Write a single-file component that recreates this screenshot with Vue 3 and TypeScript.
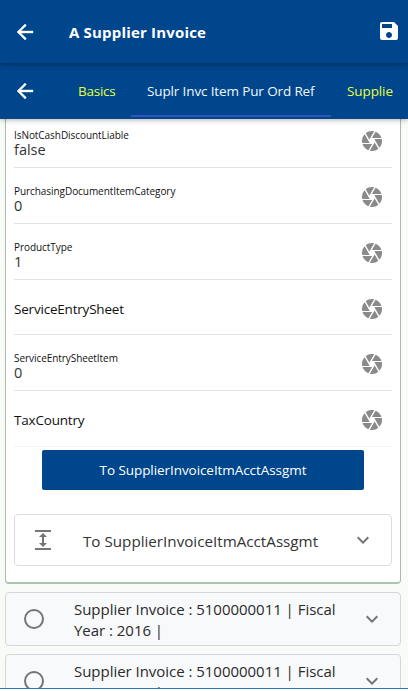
<script setup lang="ts">
interface Field {
  name: string
  value?: string
}

const fields: Field[] = [
  { name: 'IsNotCashDiscountLiable', value: 'false' },
  { name: 'PurchasingDocumentItemCategory', value: '0' },
  { name: 'ProductType', value: '1' },
  { name: 'ServiceEntrySheet' },
  { name: 'ServiceEntrySheetItem', value: '0' },
  { name: 'TaxCountry' },
]
const invoices: string[][] = [
  ['Supplier Invoice : 5100000011 | Fiscal', 'Year : 2016 |'],
  ['Supplier Invoice : 5100000011 | Fiscal', 'Year : 2016 |'],
]
const back = 'M20 11H7.83l5.59-5.59L12 4l-8 8 8 8 1.41-1.41L7.83 13H20v-2z'
const chevron = 'M16.59 8.59L12 13.17 7.41 8.59 6 10l6 6 6-6z'
</script>

<template>
  <div class="screen">
    <header class="bar title-bar">
      <svg class="icon arrow" viewBox="0 0 24 24"><path :d="back" /></svg>
      <h1>A Supplier Invoice</h1>
      <svg class="icon save" viewBox="0 0 24 24">
        <path d="M17 3H5a2 2 0 0 0-2 2v14a2 2 0 0 0 2 2h14c1.1 0 2-.9 2-2V7l-4-4zm-5 16c-1.66 0-3-1.34-3-3s1.34-3 3-3 3 1.34 3 3-1.34 3-3 3zm3-10H5V5h10v4z" />
      </svg>
    </header>
    <nav class="bar tab-bar">
      <svg class="icon arrow" viewBox="0 0 24 24"><path :d="back" /></svg>
      <a class="tab basics">Basics</a>
      <a class="tab active">Suplr Invc Item Pur Ord Ref</a>
      <a class="tab next">Supplie</a>
    </nav>

    <main class="content">
      <section class="detail">
        <div v-for="f in fields" :key="f.name" class="field">
          <div class="text">
            <template v-if="f.value">
              <div class="label">{{ f.name }}</div>
              <div class="value">{{ f.value }}</div>
            </template>
            <div v-else class="placeholder">{{ f.name }}</div>
          </div>
          <svg class="icon" viewBox="0 0 24 24">
            <path d="M9.4 10.5l4.77-8.26C13.47 2.09 12.75 2 12 2c-2.4 0-4.6.85-6.32 2.25l3.66 6.35.06-.1zM21.54 9c-.92-2.92-3.15-5.26-6-6.34L11.88 9h9.66zm.26 1h-7.49l.29.5 4.76 8.25C21 16.97 22 14.61 22 12c0-.69-.07-1.35-.2-2zM8.54 12l-3.9-6.75C3.01 7.03 2 9.39 2 12c0 .69.07 1.35.2 2h7.49l-1.15-2zm-6.08 3c.92 2.92 3.15 5.26 6 6.34L12.12 15H2.46zm11.27 0l-3.9 6.76c.7.15 1.42.24 2.17.24 2.4 0 4.6-.85 6.32-2.25l-3.66-6.35-.93 1.6z" />
          </svg>
        </div>
        <button class="action">To SupplierInvoiceItmAcctAssgmt</button>
        <div class="panel">
          <svg class="icon" viewBox="0 0 24 24">
            <path d="M4 20h16v2H4zM4 2h16v2H4zm9 7h3l-4-4-4 4h3v6H8l4 4 4-4h-3z" />
          </svg>
          <span class="panel-text">To SupplierInvoiceItmAcctAssgmt</span>
          <svg class="icon" viewBox="0 0 24 24"><path :d="chevron" /></svg>
        </div>
      </section>

      <section v-for="(lines, i) in invoices" :key="i" class="invoice">
        <svg class="icon" viewBox="0 0 24 24">
          <circle cx="12" cy="12" r="9" fill="none" stroke="currentColor" stroke-width="2" />
        </svg>
        <div class="invoice-text">
          <div v-for="line in lines" :key="line">{{ line }}</div>
        </div>
        <svg class="icon" viewBox="0 0 24 24"><path :d="chevron" /></svg>
      </section>
    </main>
    <footer class="edge"></footer>
  </div>
</template>

<style>
body {
  overflow: hidden;
}
</style>

<style scoped>
.screen {
  box-sizing: border-box;
  width: 408px;
  height: 691px;
  display: flex;
  flex-direction: column;
  overflow: hidden;
  background: #fff;
  color: #222;
  font-family: 'Open Sans', 'Noto Sans', sans-serif;
}
.screen * {
  box-sizing: border-box;
}
.icon {
  width: 24px;
  height: 24px;
  flex: none;
  fill: currentColor;
}
.arrow {
  stroke: currentColor;
  stroke-width: 0.4;
}
.bar {
  flex: none;
  display: flex;
  align-items: center;
  background: #00468c;
  color: #fff;
  position: relative;
  padding-left: 13px;
}
.title-bar {
  height: 63px;
  z-index: 3;
  box-shadow: 0 1px 5px rgba(0, 0, 0, 0.4);
}
h1 {
  flex: 1;
  margin: 0 0 0 32px;
  font-size: 15px;
  line-height: 22px;
  font-weight: 700;
  letter-spacing: 0.18px;
}
.save {
  margin: 0 7px 2px 0;
}
.tab-bar {
  height: 56px;
  z-index: 2;
  box-shadow: 0 1px 5px rgba(0, 0, 0, 0.3);
}
.tab {
  height: 56px;
  line-height: 57px;
  font-size: 13.5px;
  color: #e6ff3f;
  white-space: nowrap;
}
.basics {
  width: 94px;
  padding-left: 41px;
  letter-spacing: -0.25px;
}
.active {
  flex: none;
  width: 200px;
  height: 52px;
  line-height: 53px;
  padding-left: 16px;
  color: #f2f6fa;
  border-bottom: 2px solid #3153bd;
  letter-spacing: -0.13px;
}
.next {
  padding-left: 16px;
  letter-spacing: -0.1px;
}
.content {
  flex: none;
  height: 569px;
  overflow: hidden;
  padding: 0 7px 0 5px;
  background: #f8fbf7;
}
.detail {
  height: 465px;
  padding: 0 8px;
  background: #fff;
  border: 1px solid #a9b9ab;
  border-top: 0;
  border-bottom: 2px solid #abc5af;
  border-radius: 0 0 4px 4px;
}
.field {
  height: 55.75px;
  display: flex;
  align-items: flex-end;
  border-bottom: 1px solid #e3e3e3;
  color: #8a8a8a;
}
.field:first-child {
  height: 49px;
}
.field:nth-child(6) {
  border-bottom-color: #f3f3f3;
}
.field .icon {
  margin: 0 8px 13.6px 0;
}
.text {
  flex: 1;
  color: #222;
  white-space: nowrap;
}
.label {
  font-size: 10px;
  line-height: 14px;
  color: #111;
  letter-spacing: -0.06px;
}
.value {
  font-size: 14.5px;
  line-height: 15px;
  height: 25px;
  color: #333;
}
.placeholder {
  font-size: 13.5px;
  line-height: 20px;
  height: 35.5px;
  color: #111;
  letter-spacing: -0.2px;
}
.action {
  display: block;
  width: 322px;
  height: 40px;
  margin: 3px 0 24px 28px;
  padding: 0;
  border: 0;
  border-radius: 2px;
  background: #00468c;
  color: #fff;
  font-family: inherit;
  font-size: 13.5px;
  line-height: 40px;
  letter-spacing: -0.07px;
}
.panel {
  height: 52px;
  display: flex;
  align-items: center;
  border: 1px solid #dedede;
  border-radius: 4px;
  padding: 0 16px;
  color: #757575;
}
.panel-text {
  flex: 1;
  margin-left: 28px;
  padding-top: 2px;
  font-size: 15.2px;
  line-height: 20px;
  color: #333;
  white-space: nowrap;
}
.invoice {
  height: 54px;
  margin-top: 8px;
  display: flex;
  align-items: center;
  border: 1px solid #d5d6da;
  border-radius: 4px;
  padding: 0 16px;
  background: #f8f9fb;
  color: #757575;
}
.invoice-text {
  flex: 1;
  margin: 2px 0 0 28px;
  font-size: 15px;
  line-height: 21px;
  letter-spacing: -0.03px;
  color: #2a2a2a;
  white-space: nowrap;
}
.edge {
  flex: none;
  height: 3px;
  border-top: 1px solid #2e78b7;
  background: #fff;
}
</style>
